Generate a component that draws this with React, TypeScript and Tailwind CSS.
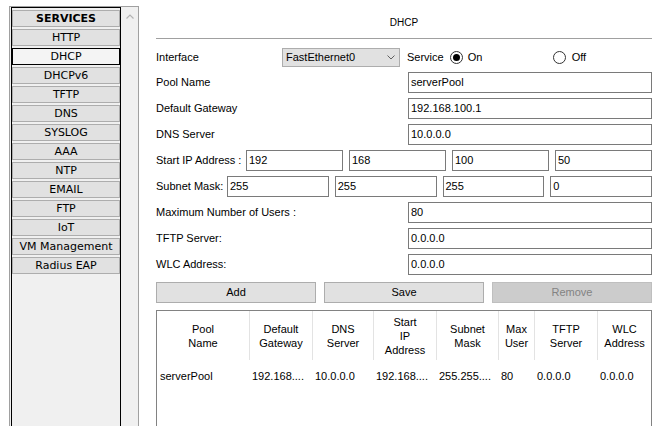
import React from 'react';

const SERVICES = ['HTTP', 'DHCP', 'DHCPv6', 'TFTP', 'DNS', 'SYSLOG', 'AAA', 'NTP', 'EMAIL', 'FTP', 'IoT', 'VM Management', 'Radius EAP'];

const COLUMNS = [
  ['Pool', 'Name'],
  ['Default', 'Gateway'],
  ['DNS', 'Server'],
  ['Start', 'IP', 'Address'],
  ['Subnet', 'Mask'],
  ['Max', 'User'],
  ['TFTP', 'Server'],
  ['WLC', 'Address'],
];

const ROW = ['serverPool', '192.168....', '10.0.0.0', '192.168....', '255.255....', '80', '0.0.0.0', '0.0.0.0'];

function Field({ value }: { value: string }) {
  return (
    <div className="flex h-[21px] min-w-0 items-center border border-[#7a7a7a] bg-white pl-[2px] text-[11px] text-black">
      {value}
    </div>
  );
}

function LabeledField({ label, value }: { label: string; value: string }) {
  return (
    <div className="flex h-[21px] items-center">
      <div className="w-[252px] shrink-0 text-[11px]">{label}</div>
      <div className="flex-1">
        <Field value={value} />
      </div>
    </div>
  );
}

function Radio({ checked }: { checked?: boolean }) {
  return (
    <span className="flex h-[13px] w-[13px] items-center justify-center rounded-full border border-[#333333] bg-white">
      {checked && <span className="h-[7px] w-[7px] rounded-full bg-black" />}
    </span>
  );
}

export default function App() {
  return (
    <div className="flex h-[426px] w-[667px] overflow-hidden bg-white text-black">
      {/* Services list */}
      <div className="w-[139px] shrink-0 pl-[9px] pt-[6px]">
        <div className="flex h-[430px] border-x border-t border-[#a0a0a0] bg-[#f0f0f0]">
          <div className="ml-[1px] flex w-[110px] flex-col gap-[2px] border border-black pt-[2px] font-['DejaVu_Sans',sans-serif] text-[11px]">
            <div className="flex h-[17px] items-center justify-center border border-[#adadad] bg-[#e1e1e1] pt-[2px] font-bold">
              SERVICES
            </div>
            {SERVICES.map((s) => (
              <div
                key={s}
                className={
                  s === 'DHCP'
                    ? 'flex h-[17px] items-center justify-center border border-black bg-[#f4f4f4] pt-[2px]'
                    : 'flex h-[17px] items-center justify-center border border-[#adadad] bg-[#e1e1e1] pt-[2px]'
                }
              >
                {s}
              </div>
            ))}
          </div>
          <div className="flex flex-1 justify-center pt-[7px]">
            <svg width="8" height="5" viewBox="0 0 8 5">
              <polyline points="0.5,4.5 4,1 7.5,4.5" fill="none" stroke="#b4b4b4" strokeWidth="1.2" />
            </svg>
          </div>
        </div>
      </div>

      {/* DHCP form */}
      <div className="w-[513px] shrink-0 pl-[17px] font-['Liberation_Sans',Arial,sans-serif]">
        <div className="h-[39px] border-b border-[#a0a0a0] pt-[16px] text-center text-[10px] leading-[14px]">DHCP</div>

        <div className="flex flex-col gap-[5px] pt-[9px]">
          <div className="flex h-[19px] items-center text-[11px]">
            <div className="w-[126px] shrink-0">Interface</div>
            <div className="flex h-[19px] w-[118px] items-center justify-between border border-[#adadad] bg-[#e1e1e1] pl-[3px] pr-[4px]">
              <span>FastEthernet0</span>
              <svg width="8" height="5" viewBox="0 0 8 5">
                <polyline points="0.5,0.5 4,4 7.5,0.5" fill="none" stroke="#606060" strokeWidth="1" />
              </svg>
            </div>
            <span className="ml-[7px]">Service</span>
            <div className="ml-[6px] flex w-[103px] items-center gap-[5px]">
              <Radio checked />
              <span>On</span>
            </div>
            <div className="flex items-center gap-[6px]">
              <Radio />
              <span>Off</span>
            </div>
          </div>

          <LabeledField label="Pool Name" value="serverPool" />
          <LabeledField label="Default Gateway" value="192.168.100.1" />
          <LabeledField label="DNS Server" value="10.0.0.0" />

          <div className="flex h-[21px] items-center">
            <div className="w-[90px] shrink-0 text-[11px]">Start IP Address :</div>
            <div className="grid flex-1 grid-cols-4 gap-[6px]">
              <Field value="192" />
              <Field value="168" />
              <Field value="100" />
              <Field value="50" />
            </div>
          </div>

          <div className="flex h-[21px] items-center">
            <div className="w-[71px] shrink-0 text-[11px]">Subnet Mask:</div>
            <div className="grid flex-1 grid-cols-4 gap-[6px]">
              <Field value="255" />
              <Field value="255" />
              <Field value="255" />
              <Field value="0" />
            </div>
          </div>

          <LabeledField label="Maximum Number of Users :" value="80" />
          <LabeledField label="TFTP Server:" value="0.0.0.0" />
          <LabeledField label="WLC Address:" value="0.0.0.0" />

          <div className="mt-[2px] grid grid-cols-3 gap-[8px] text-[11px]">
            <div className="flex h-[21px] items-center justify-center border border-[#adadad] bg-[#e1e1e1]">Add</div>
            <div className="flex h-[21px] items-center justify-center border border-[#adadad] bg-[#e1e1e1]">Save</div>
            <div className="flex h-[21px] items-center justify-center border border-[#bfbfbf] bg-[#cccccc] text-[#838383]">Remove</div>
          </div>

          <div className="mt-[2px] h-[140px] border border-[#828282] text-[11px]">
            <div className="grid grid-cols-[92px_63px_61px_63px_62px_36px_63px_54px]">
              {COLUMNS.map((lines, i) => (
                <div
                  key={i}
                  className={
                    i === 0
                      ? 'flex h-[49px] flex-col items-center justify-center leading-[14px]'
                      : 'flex h-[49px] flex-col items-center justify-center border-l border-[#e3e3e3] leading-[14px]'
                  }
                >
                  {lines.map((l) => (
                    <span key={l}>{l}</span>
                  ))}
                </div>
              ))}
              {ROW.map((v, i) => (
                <div key={i} className="overflow-hidden whitespace-nowrap pl-[3px] pt-[9px] leading-[14px]">
                  {v}
                </div>
              ))}
            </div>
          </div>
        </div>
      </div>
    </div>
  );
}
